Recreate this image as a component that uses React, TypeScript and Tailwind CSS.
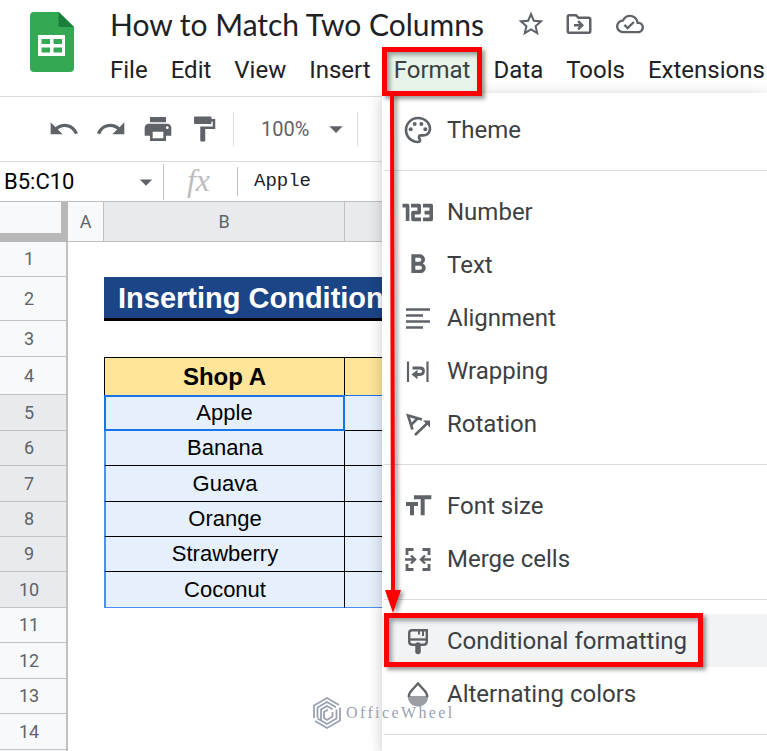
import React from 'react';
import {
  MdArrowDropDown,
  MdFormatBold,
  MdFormatPaint,
  MdFormatSize,
  MdOutlineCloudDone,
  MdOutlineDriveFileMove,
  MdOutlinePalette,
  MdPrint,
  MdRedo,
  MdStarBorder,
  MdUndo,
} from 'react-icons/md';

const MENUS = ['File', 'Edit', 'View', 'Insert', 'Format', 'Data', 'Tools', 'Extensions'];

const SHOP_A = ['Apple', 'Banana', 'Guava', 'Orange', 'Strawberry', 'Coconut'];

const EMPTY_ROWS = [
  { n: 11, h: 'h-[35px]' },
  { n: 12, h: 'h-[36px]' },
  { n: 13, h: 'h-[35px]' },
  { n: 14, h: 'h-[36px]' },
];
const DATA_HEIGHTS = ['h-[36px]', 'h-[35px]', 'h-[36px]', 'h-[35px]', 'h-[35px]', 'h-[36px]'];

const Icon: React.FC<{ children: React.ReactNode }> = ({ children }) => (
  <svg viewBox="0 0 32 32" width="32" height="32" fill="none" stroke="currentColor" strokeWidth="2.4">
    {children}
  </svg>
);

const NumberIcon = () => (
  <Icon>
    <path
      d="M0.5 9.6H5.6V25M9 9.6H17.2V16.6H11V23.4H19M21 9.6H29.2V23.4H21M22.5 16.6H29"
      strokeWidth="3.6"
      strokeLinejoin="round"
    />
  </Icon>
);

const AlignIcon = () => (
  <Icon>
    <path d="M4 7.5H28M4 13.5H21M4 19.5H28M4 25.5H21" />
  </Icon>
);

const WrapIcon = () => (
  <Icon>
    <path d="M6 6.5V27M25.5 6.5V27" strokeWidth="2.2" />
    <path d="M10.5 13H18C20.5 13 21.5 14.4 21.5 16S20.5 19.5 18 19.5H14" strokeWidth="2.8" />
    <path d="M9.5 19.5L15.5 14.8V24.2Z" fill="currentColor" stroke="none" />
  </Icon>
);

const RotateIcon = () => (
  <Icon>
    <path d="M10.5 21.5L6 7.5L20 11.5M9 17L15.5 10.5" strokeWidth="2.6" />
    <path d="M13 27L26 14.5" strokeWidth="2.6" />
    <path d="M21 12.5H28V19.5Z" fill="currentColor" stroke="none" />
  </Icon>
);

const MergeIcon = () => (
  <Icon>
    <path d="M5 12V6.5H11.5M5 21V26.5H11.5M27 12V6.5H20.5M27 21V26.5H20.5" strokeWidth="2.8" />
    <path d="M3 16.5H12M9 12.5L13 16.5L9 20.5M29 16.5H20M23 12.5L19 16.5L23 20.5" />
  </Icon>
);

const BrushIcon = () => (
  <Icon>
    <path d="M10 5.2H24.8V16.5Q24.8 19.8 21.5 19.8H10.5Q7.2 19.8 7.2 16.5V8Q7.2 5.2 10 5.2Z" />
    <path d="M7 14.5H25" />
    <path d="M17 5V9.5M21 5V11" strokeWidth="2" />
    <path d="M16 20V26.5" strokeWidth="5.5" strokeLinecap="round" />
  </Icon>
);

const DropIcon = () => (
  <Icon>
    <path d="M5.8 18H26.2C26.2 24.5 21.5 28.5 16 28.5S5.8 24.5 5.8 18Z" fill="#9b9ea3" stroke="none" />
    <path d="M6.8 19C6.8 15.8 8 14 10 12L16 5.5L22 12C24 14 25.2 15.8 25.2 19" strokeWidth="2.4" />
  </Icon>
);

type Entry = { label: string; icon: React.ReactNode; active?: boolean };

const GROUPS: Entry[][] = [
  [{ label: 'Theme', icon: <MdOutlinePalette size={32} /> }],
  [
    { label: 'Number', icon: <NumberIcon /> },
    { label: 'Text', icon: <MdFormatBold size={32} /> },
    { label: 'Alignment', icon: <AlignIcon /> },
    { label: 'Wrapping', icon: <WrapIcon /> },
    { label: 'Rotation', icon: <RotateIcon /> },
  ],
  [
    { label: 'Font size', icon: <MdFormatSize size={32} /> },
    { label: 'Merge cells', icon: <MergeIcon /> },
  ],
  [
    { label: 'Conditional formatting', icon: <BrushIcon />, active: true },
    { label: 'Alternating colors', icon: <DropIcon /> },
  ],
];

const HIGHLIGHT = 'pointer-events-none absolute border-[5px] border-[#fe0000] shadow-[3px_3px_4px_rgba(0,0,0,0.4),inset_3px_3px_4px_rgba(0,0,0,0.35)]';

const SheetsLogo = () => (
  <svg viewBox="0 0 44 60" width="44" height="60" aria-label="Sheets">
    <path d="M4 0H29L44 15V56Q44 60 40 60H4Q0 60 0 56V4Q0 0 4 0Z" fill="#34a853" />
    <path d="M28.5 0L44 15H28.5Z" fill="#188038" />
    <path d="M8 23H35V44H8Z" fill="#fff" />
    <path d="M11.5 27H20V32H11.5ZM23.5 27H32V32H23.5ZM11.5 35.5H20V40.5H11.5ZM23.5 35.5H32V40.5H23.5Z" fill="#34a853" />
  </svg>
);

const Header = () => (
  <header className="flex border-b border-[#dadce0] pt-1 pb-1 pl-[30px]">
    <a href="#home" className="mt-2 shrink-0">
      <SheetsLogo />
    </a>
    <div className="ml-[25px] min-w-0">
      <div className="mb-1 flex h-10 items-center pl-[11px] text-[#5f6368]">
        <input
          aria-label="Document name"
          defaultValue="How to Match Two Columns"
          className="mr-2 w-[398px] font-['Lato',sans-serif] text-[30px] text-[#202124] outline-none"
        />
        <button aria-label="Star" className="mr-[18px]"><MdStarBorder size={30} /></button>
        <button aria-label="Move" className="mr-[22px]"><MdOutlineDriveFileMove size={30} /></button>
        <button aria-label="Saved to Drive"><MdOutlineCloudDone size={28} /></button>
      </div>
      <nav className="flex h-11 gap-px">
        {MENUS.map((name) => (
          <button
            key={name}
            className={name === 'Format' ? 'relative z-20 bg-[#e6f4ea] px-[11px] text-[#3c4043]' : 'px-[11px]'}
          >
            {name}
            {name === 'Format' && <span className={`${HIGHLIGHT} -inset-x-px -top-px -bottom-1`} />}
          </button>
        ))}
      </nav>
    </div>
  </header>
);

const Toolbar = () => (
  <div className="flex h-[65px] items-center border-b border-[#dadce0] pl-12 text-[#5f6368]">
    <div className="flex gap-[15px]">
      <button aria-label="Undo"><MdUndo size={32} /></button>
      <button aria-label="Redo"><MdRedo size={32} /></button>
      <button aria-label="Print"><MdPrint size={32} /></button>
      <button aria-label="Paint format"><MdFormatPaint size={30} /></button>
    </div>
    <span className="ml-[14px] h-[34px] w-px bg-[#dadce0]" />
    <button className="ml-[27px] flex items-center text-[20px]">
      100%
      <MdArrowDropDown size={32} className="ml-[11px]" />
    </button>
    <span className="ml-[5px] h-[34px] w-px bg-[#dadce0]" />
  </div>
);

const FormulaBar = () => (
  <div className="flex h-[40px] items-center border-b border-[#c0c0c0]">
    <input aria-label="Name box" defaultValue="B5:C10" className="w-[131px] pl-[4px] text-[22px] text-black outline-none" />
    <button aria-label="Named ranges" className="text-[#5f6368]"><MdArrowDropDown size={30} /></button>
    <span className="ml-[2px] h-[36px] w-px bg-[#c0c0c0]" />
    <span className="w-[73px] pr-1 pb-1 text-center font-['Liberation_Serif',serif] text-[32px] leading-8 text-[#bdbdbd] italic">fx</span>
    <span className="h-[29px] w-px bg-[#c0c0c0]" />
    <input
      aria-label="Formula"
      defaultValue="Apple"
      className="ml-4 min-w-0 flex-1 font-['Liberation_Mono',monospace] text-[19px] text-[#202124] outline-none"
    />
  </div>
);

const RowHead: React.FC<{ n?: number; selected?: boolean }> = ({ n, selected }) => (
  <th
    scope="row"
    className={
      selected
        ? 'border-r-2 border-b border-[#c0c0c0] bg-[#e8eaed] pr-2 text-[18px] font-normal text-[#5f6368]'
        : 'border-r-2 border-b border-[#c0c0c0] bg-[#f8f9fa] pr-2 text-[18px] font-normal text-[#5f6368]'
    }
  >
    {n}
  </th>
);

const Sheet = () => (
  <table className="w-full table-fixed border-separate border-spacing-0 leading-6">
    <colgroup>
      <col className="w-[68px]" />
      <col className="w-[36px]" />
      <col className="w-[241px]" />
      <col />
    </colgroup>
    <thead className="text-[18px] text-[#5f6368]">
      <tr className="h-[40px]">
        <td className="border-r-[7px] border-b-[9px] border-[#b8b8b8] bg-[#f8f9fa]" />
        <th className="border-r border-b border-[#c0c0c0] bg-[#f8f9fa] font-normal">A</th>
        <th className="border-r border-b border-[#c0c0c0] bg-[#e8eaed] font-normal">B</th>
        <th className="border-b border-[#c0c0c0] bg-[#e8eaed] font-normal" />
      </tr>
    </thead>
    <tbody className="font-['Liberation_Sans',sans-serif] text-[22px] text-black [&_th]:font-['Roboto',sans-serif]">
      <tr className="h-[35px]"><RowHead n={1} /></tr>
      <tr className="h-[44px]">
        <RowHead n={2} />
        <td />
        <td
          colSpan={2}
          className="overflow-hidden border-b-[3px] border-black bg-[#1c4587] pl-[14px] text-[29px] font-bold whitespace-nowrap text-white"
        >
          Inserting Condition
        </td>
      </tr>
      <tr className="h-[36px]"><RowHead n={3} /></tr>
      <tr className="h-[38px]">
        <RowHead n={4} />
        <td />
        <td className="border-t border-r border-l border-black bg-[#ffe599] text-center text-[24px] font-bold">Shop A</td>
        <td className="border-t border-black bg-[#ffe599]" />
      </tr>
      {SHOP_A.map((name, i) => {
        const last = i === SHOP_A.length - 1;
        return (
          <tr key={name} className={DATA_HEIGHTS[i]}>
            <RowHead n={i + 5} selected />
            <td />
            <td
              className={
                i === 0
                  ? 'border-2 border-[#1a73e8] bg-[#e6f0fd] text-center'
                  : last
                    ? 'border-r border-b border-l-2 border-r-black border-b-[#4a8ff0] border-l-[#4a8ff0] bg-[#e6f0fd] text-center'
                    : 'border-r border-b border-l-2 border-r-black border-b-black border-l-[#4a8ff0] bg-[#e6f0fd] text-center'
              }
            >
              {name}
            </td>
            <td
              className={
                i === 0
                  ? 'border-t border-b border-t-[#1a73e8] border-b-black bg-[#e6f0fd]'
                  : last
                    ? 'border-b border-[#4a8ff0] bg-[#e6f0fd]'
                    : 'border-b border-black bg-[#e6f0fd]'
              }
            />
          </tr>
        );
      })}
      {EMPTY_ROWS.map((row) => (
        <tr key={row.n} className={row.h}><RowHead n={row.n} /></tr>
      ))}
      <tr className="h-[35px]"><RowHead /></tr>
    </tbody>
  </table>
);

const FormatMenu = () => (
  <div
    role="menu"
    className="absolute top-[93px] right-0 left-[382px] z-10 bg-white pt-[10px] pb-4 shadow-[0_3px_14px_rgba(0,0,0,0.22)]"
  >
    {GROUPS.map((group, i) => (
      <React.Fragment key={group[0].label}>
        {i > 0 && <hr className="my-[14px] ml-[2px] border-[#dadce0]" />}
        {group.map((entry) => (
          <button
            key={entry.label}
            role="menuitem"
            className={
              entry.active
                ? 'relative flex h-[53px] w-full items-center gap-[13px] bg-[#f1f3f4] pl-5 text-[#5f6368]'
                : 'flex h-[53px] w-full items-center gap-[13px] pl-5 text-[#5f6368]'
            }
          >
            {entry.icon}
            <span className="text-[#3c4043]">{entry.label}</span>
            {entry.active && <span className={`${HIGHLIGHT} -top-px bottom-0 left-[2px] w-[319px]`} />}
          </button>
        ))}
      </React.Fragment>
    ))}
    <hr className="mt-[14px] ml-[2px] border-[#dadce0]" />
  </div>
);

// Arrow from the Format menu down to the highlighted entry
const Arrow = () => (
  <svg
    className="pointer-events-none absolute top-[94px] left-[384px] z-20 drop-shadow-[3px_2px_2px_rgba(0,0,0,0.4)]"
    width="20"
    height="520"
    viewBox="0 0 20 520"
  >
    <path d="M6 0H10L11 496H17L9 519L1 496H7Z" fill="#fe0000" />
  </svg>
);

const Watermark = () => (
  <div className="pointer-events-none absolute top-[696px] left-[312px] z-20 flex items-center gap-[4px] text-[#9aa1b3]">
    <svg viewBox="0 0 30 34" width="30" height="34" fill="none" stroke="currentColor" strokeWidth="1.8">
      <path d="M2 22V9.5L15 2L27 9M5.5 22V11.5L15 6L24 11.2M28 11.5V24.5L15 32L3 25M24.5 13.5V22.5L15 28L5.5 22.5" />
      <path d="M9 24V13.5L15 10L20.5 13.2M20.5 16V20.5L15 24L12 22V16L16 13.8" />
    </svg>
    <span className="font-['Liberation_Serif',serif] text-[16px] tracking-[0.15em]">OfficeWheel</span>
  </div>
);

const App: React.FC = () => (
  <div className="relative h-screen overflow-hidden bg-white font-['Roboto',sans-serif] text-[24px] text-[#202124]">
    <Header />
    <Toolbar />
    <FormulaBar />
    <Sheet />
    <FormatMenu />
    <Arrow />
    <Watermark />
  </div>
);

export default App;
